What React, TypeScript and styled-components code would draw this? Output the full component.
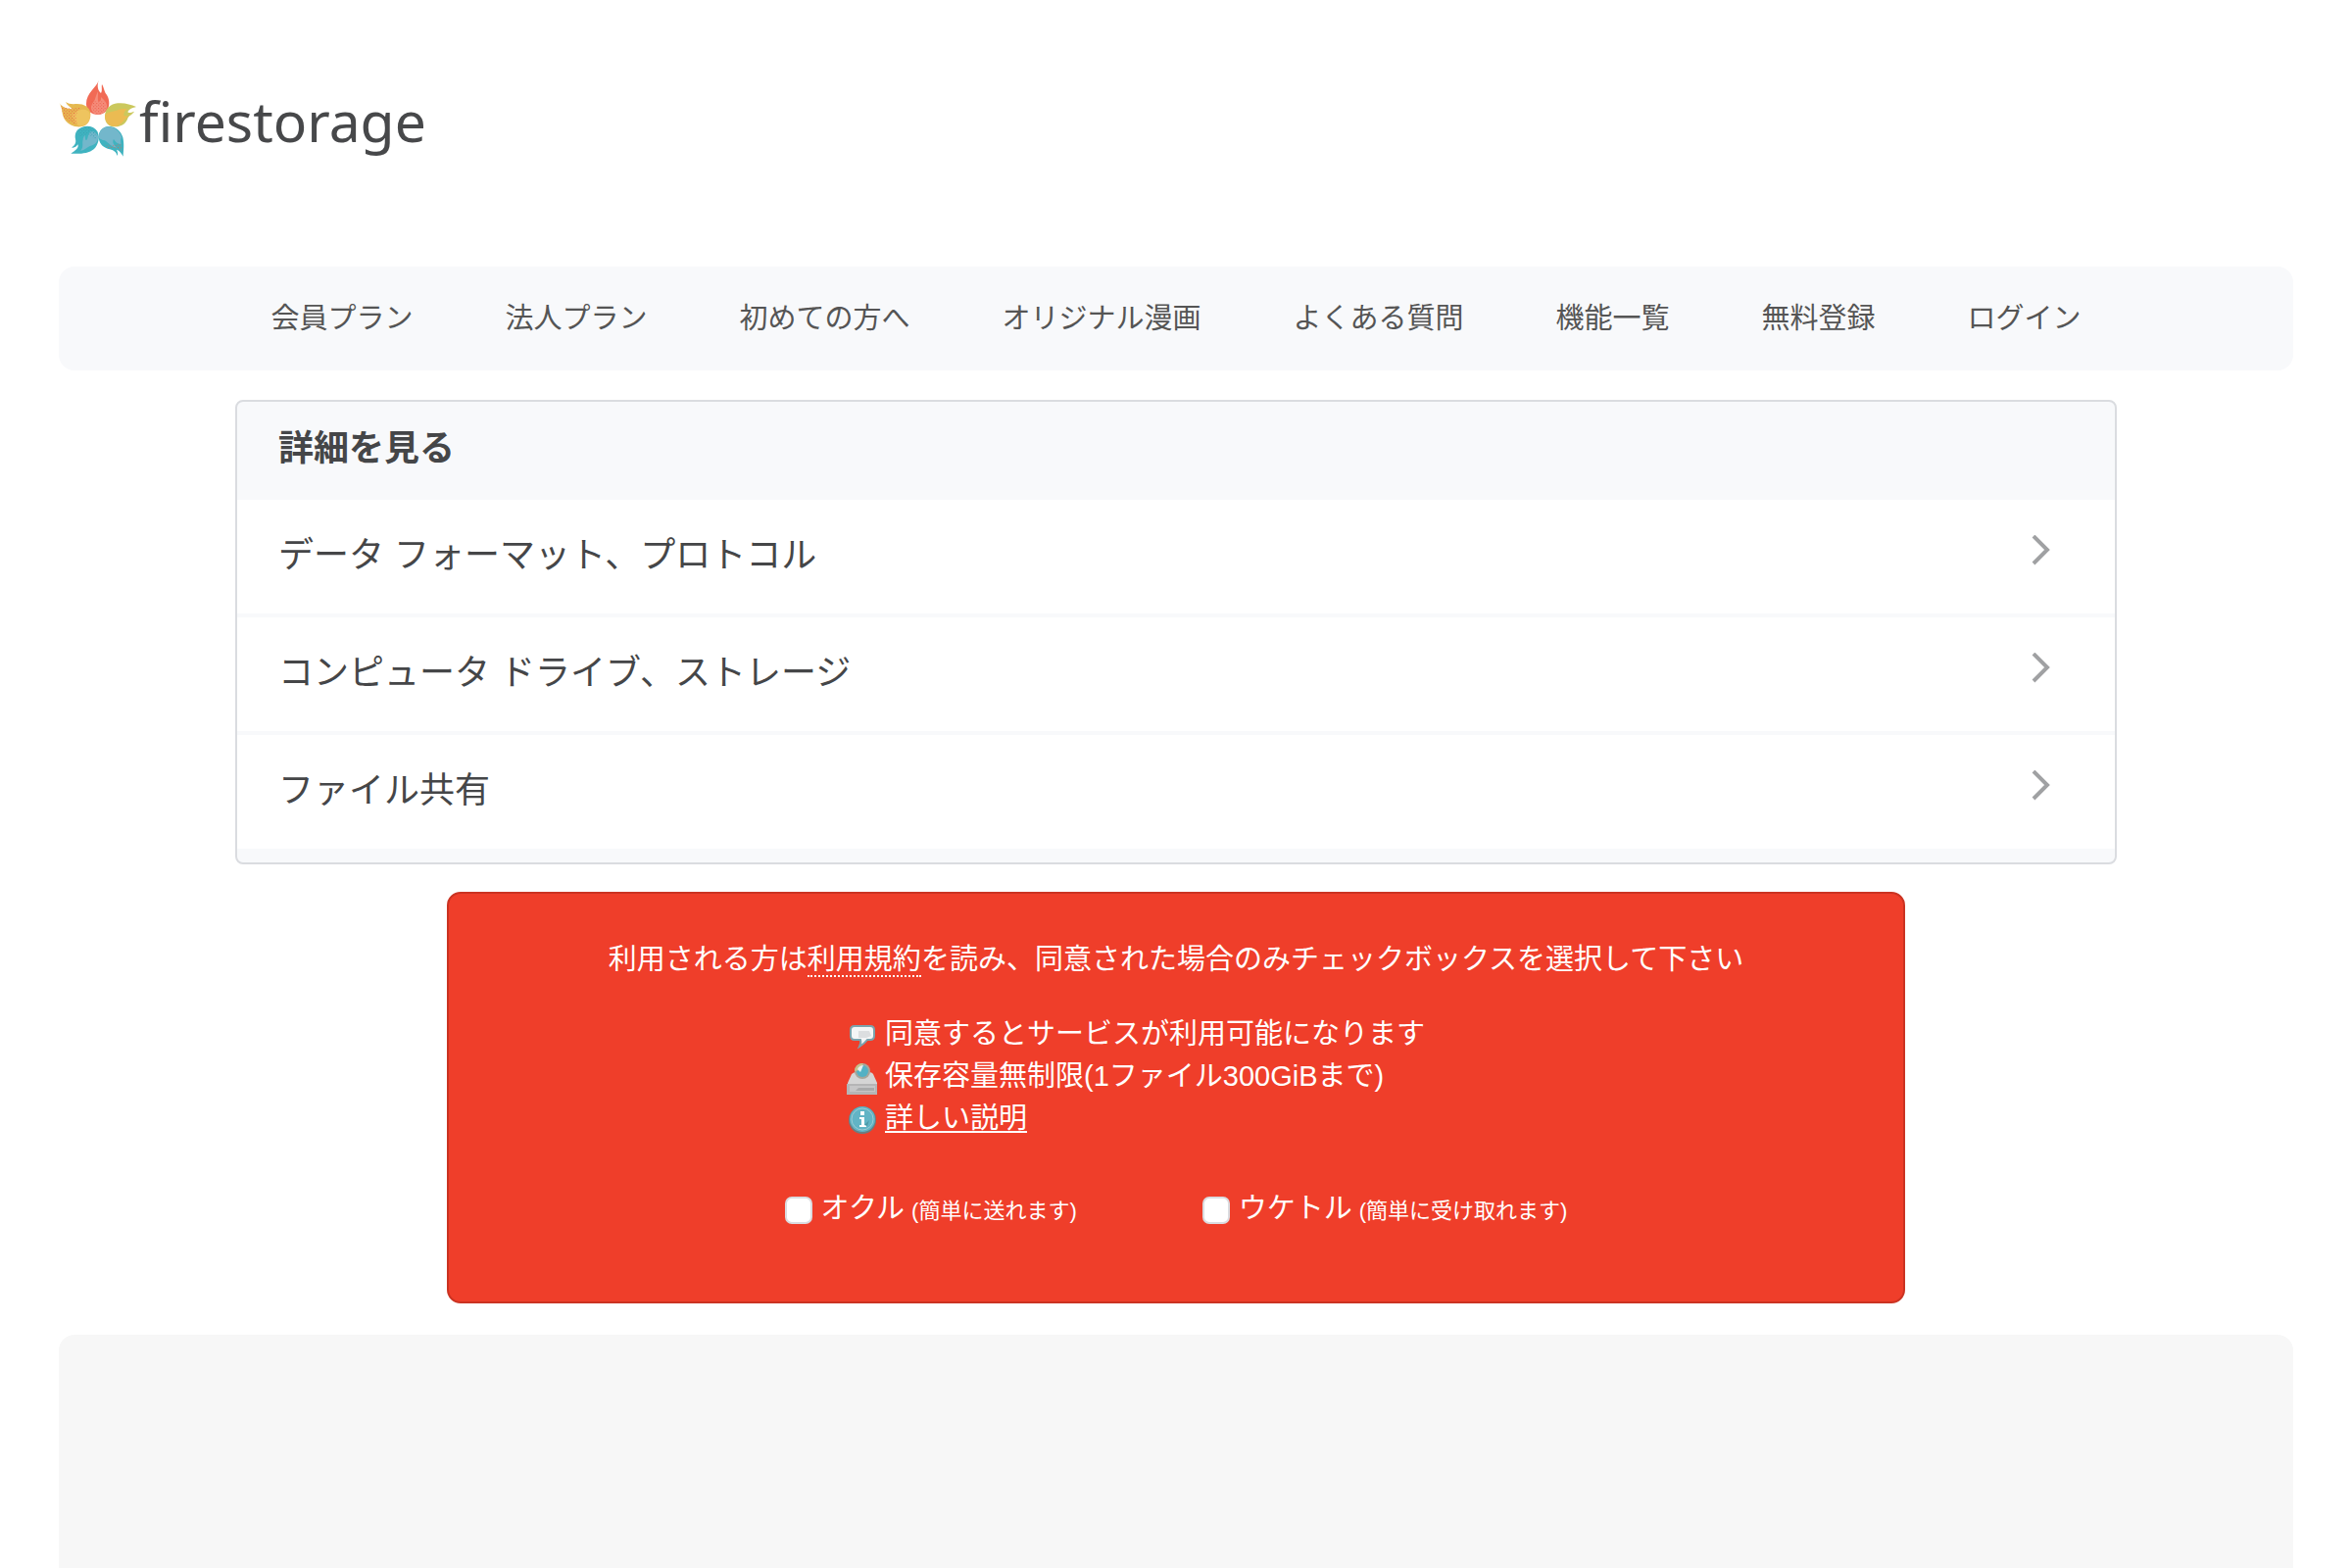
import React, { useState } from "react";
import styled, { createGlobalStyle } from "styled-components";

const GlobalStyle = createGlobalStyle`
  *, *::before, *::after { box-sizing: border-box; }
  body {
    margin: 0;
    background: #fff;
    color: #454648;
    font-family: "Liberation Sans", "Noto Sans CJK JP", sans-serif;
    font-size: 29px;
    line-height: 42px;
  }
  a { color: inherit; text-decoration: none; }
  ul { list-style: none; margin: 0; padding: 0; }
`;

const Page = styled.div`
  display: flex;
  flex-direction: column;
  min-height: 100vh;
  padding: 80px 60px 0;
`;

const Header = styled.header`
  display: flex;
  height: 192px;
  align-items: flex-start;
`;

const LogoLink = styled.a`
  display: flex;
  align-items: flex-start;
  gap: 2px;
`;

const LogoText = styled.span`
  font-family: "Noto Sans", sans-serif;
  font-size: 57px;
  line-height: 86px;
  color: #47484a;
`;

const Nav = styled.nav`
  background: #f8f9fb;
  border-radius: 16px;
  padding: 32px 0;
`;

const NavList = styled.ul`
  display: flex;
  justify-content: center;
  gap: 94px;
  color: #555;
`;

const Main = styled.main`
  flex: 1;
  display: flex;
  flex-direction: column;
`;

const Card = styled.section`
  width: 1920px;
  max-width: 100%;
  margin: 30px auto 0;
  padding-bottom: 14px;
  border: 2px solid #dadce0;
  border-radius: 8px;
  background: #f8f9fb;
  font-size: 36px;
`;

const CardTitle = styled.h2`
  margin: 0;
  padding: 21px 42px 25px;
  font-size: 36px;
  line-height: 54px;
  font-weight: 700;
`;

const TopicList = styled.ul`
  display: grid;
  gap: 4px;
`;

const TopicLink = styled.a`
  display: flex;
  align-items: center;
  justify-content: space-between;
  padding: 30px 66px 32px 42px;
  line-height: 54px;
  background: #fff;
`;

const Consent = styled.section`
  width: 1488px;
  max-width: 100%;
  margin: 28px auto 32px;
  padding: 46px 24px 74px;
  border: 2px solid #cb3322;
  border-radius: 14px;
  background: #ef3e2a;
  color: #fff;
`;

const Lead = styled.p`
  margin: 0 0 34px;
  text-align: center;
`;

const TermsLink = styled.a`
  border-bottom: 2px dotted #fff;
`;

const Notes = styled.ul`
  display: grid;
  gap: 1px;
  width: 672px;
  margin: 0 auto 50px;
`;

const Note = styled.li`
  display: flex;
  align-items: flex-end;
  gap: 7px;
`;

const DetailLink = styled.a`
  text-decoration: underline;
  text-decoration-thickness: 2px;
  text-underline-offset: 3px;
`;

const Options = styled.div`
  display: flex;
  justify-content: center;
  gap: 128px;
`;

const Option = styled.label`
  display: flex;
  align-items: baseline;
  cursor: pointer;

  small {
    margin-left: 7px;
    font-size: 22px;
    line-height: 30px;
  }
`;

const Check = styled.input`
  appearance: none;
  align-self: center;
  width: 28px;
  height: 28px;
  margin: 4px 9px 0 0;
  border: 2px solid #dadce0;
  border-radius: 7px;
  background: #fff;

  &:checked { background: #3fb3c0; }
`;

const Banner = styled.div`
  flex: 1;
  border-radius: 16px 16px 0 0;
  background: #f7f7f7;
`;

const Flower = () => (
  <svg width="80" height="80" viewBox="60 60 240 240" aria-hidden="true">
    <defs>
      <pattern id="dots" width="10" height="10" patternUnits="userSpaceOnUse">
        <rect width="3" height="3" fill="#ee5b48" />
        <rect x="5" y="5" width="3" height="3" fill="#ee5b48" />
      </pattern>
      <pattern id="tealDots" width="10" height="10" patternUnits="userSpaceOnUse">
        <rect width="3" height="3" fill="#3a9fb0" />
        <rect x="5" y="5" width="3" height="3" fill="#3a9fb0" />
      </pattern>
    </defs>
    <path fill="#f16a55" d="M182 66C176 88 144 104 144 138C144 158 160 171 180 171C200 171 214 156 214 136C214 114 204 110 200 98C197 90 196 84 192 78C190 88 194 98 189 105C180 98 176 84 182 66Z" />
    <path fill="#f48d7b" d="M179 100C182 110 178 116 180 128C186 134 190 128 189 117C200 128 208 134 207 148C205 163 194 170 180 170C168 170 160 163 159 150C159 138 170 130 172 120C174 112 177 108 179 100Z" />
    <path fill="url(#dots)" d="M160 130L200 130L205 150L190 169L164 166Z" />
    <path fill="#e5b950" d="M62 136C72 152 68 166 76 182C86 200 108 210 128 208C148 206 158 188 157 168C156 148 138 138 116 138C102 139 90 139 81 132C85 142 94 146 101 154C84 153 70 148 62 136Z" />
    <path fill="#f3cb69" opacity=".6" d="M96 166C104 174 108 168 116 160C132 152 152 154 156 170C156 190 146 204 128 206C110 206 108 184 96 166Z" />
    <path fill="url(#dots)" d="M66 144L94 152L126 150L112 172L116 202L88 190L76 180Z" />
    <path fill="#cbc85d" d="M297 147C280 140 262 134 240 136C218 138 202 152 201 176C201 198 214 208 232 208C256 207 266 196 271 182C275 173 285 171 291 161C282 164 274 168 271 163C275 153 286 150 297 147Z" />
    <path fill="#ebbb52" d="M201 172C212 160 232 162 242 156C254 152 264 153 271 152C262 157 258 165 259 174C266 176 270 176 276 174C264 180 256 198 238 206C218 210 201 198 201 172Z" />
    <path fill="#3fb3c0" d="M97 290C120 291 150 292 168 276C182 262 186 240 178 222C168 206 146 203 130 210C112 217 108 232 111 246C114 258 108 266 99 271C106 274 113 270 118 262C123 272 110 282 97 290Z" />
    <path fill="#73b7cb" d="M126 282C138 270 130 258 134 248C134 242 137 238 139 233C142 241 140 247 144 250C151 244 148 230 156 224C166 220 174 226 181 238C180 254 171 264 158 266C146 270 141 278 126 282Z" />
    <path fill="url(#tealDots)" d="M116 216L150 207L176 222L174 248L150 232L124 238Z" />
    <path fill="#3fb3c0" d="M257 299C258 280 261 262 256 240C250 220 232 206 210 207C190 210 180 226 182 244C186 264 200 274 216 277C230 280 236 287 239 297C242 291 240 285 237 278C246 281 252 290 257 299Z" />
    <path fill="#73b7cb" d="M183 242C182 222 194 209 212 208C232 209 248 224 252 240C247 248 250 254 250 262C240 260 232 254 228 246C222 256 230 266 238 272C220 270 212 256 200 250C192 248 188 246 183 242Z" />
    <path fill="url(#dots)" opacity=".75" d="M202 260L220 266L250 258L255 282L234 274L210 272Z" />
  </svg>
);

const Chevron = () => (
  <svg width="20" height="42" viewBox="0 0 20 42" fill="none" aria-hidden="true">
    <path d="M3 1L17 15L3 29" stroke="#a0a1a3" strokeWidth="4" />
  </svg>
);

const SpeechIcon = () => (
  <svg width="32" height="36" viewBox="0 1 32 36" aria-hidden="true">
    <path d="M8 8H24Q28 8 28 12V18Q28 22 24 22H21Q18 26 13 29Q15 25 14 22H8Q4 22 4 18V12Q4 8 8 8Z" fill="#f4f5f6" stroke="#7ba3ad" strokeWidth="2" />
    <path d="M12 13H23L25 18L20 20H12Z" fill="#dcdee0" />
  </svg>
);

const DiskIcon = () => (
  <svg width="32" height="34" viewBox="0 0 32 34" aria-hidden="true">
    <path d="M1 20L5 11Q7 9 10 9H22Q26 9 27 11L31 20V31H0Z" fill="#d5d5d5" />
    <path d="M0 21H31V32H0Z" fill="#b5b5b6" />
    <path d="M3 23H29V29H3Z" fill="#c6c6c7" />
    <path d="M12 25H28V28H9Z" fill="#a9aaab" />
    <circle cx="16" cy="8" r="8" fill="#a5a69b" />
    <circle cx="16" cy="8" r="6" fill="#53b1c4" />
    <path d="M8 8A8 8 0 0 1 17 0L13 7Z" fill="#c6c18b" />
    <path d="M11 6Q13 2 17 2L14 9Z" fill="#e7efef" />
  </svg>
);

const InfoIcon = () => (
  <svg width="32" height="34" viewBox="0 0 32 34" aria-hidden="true">
    <circle cx="16" cy="15" r="14" fill="#687f83" />
    <circle cx="16" cy="14" r="13" fill="#62b4c5" />
    <circle cx="16" cy="14" r="11" fill="none" stroke="#9bcbd4" strokeWidth="1" />
    <path d="M14 6H18V10H14ZM13 12H18V20H20V22H13V20H15V14H13Z" fill="#fff" />
    <path d="M18 20L23 15L21 21Z" fill="#4c99a7" />
  </svg>
);

const navItems = ["会員プラン", "法人プラン", "初めての方へ", "オリジナル漫画", "よくある質問", "機能一覧", "無料登録", "ログイン"];
const topics = ["データ フォーマット、プロトコル", "コンピュータ ドライブ、ストレージ", "ファイル共有"];

export default function App() {
  const [send, setSend] = useState(false);
  const [receive, setReceive] = useState(false);

  return (
    <>
      <GlobalStyle />
      <Page>
        <Header>
          <LogoLink href="#">
            <Flower />
            <LogoText>firestorage</LogoText>
          </LogoLink>
        </Header>
        <Nav>
          <NavList>
            {navItems.map((item) => (
              <li key={item}><a href="#">{item}</a></li>
            ))}
          </NavList>
        </Nav>
        <Main>
          <Card>
            <CardTitle>詳細を見る</CardTitle>
            <TopicList>
              {topics.map((topic) => (
                <li key={topic}>
                  <TopicLink href="#">
                    {topic}
                    <Chevron />
                  </TopicLink>
                </li>
              ))}
            </TopicList>
          </Card>
          <Consent>
            <Lead>
              利用される方は<TermsLink href="#">利用規約</TermsLink>を読み、同意された場合のみチェックボックスを選択して下さい
            </Lead>
            <Notes>
              <Note><SpeechIcon />同意するとサービスが利用可能になります</Note>
              <Note><DiskIcon />保存容量無制限(1ファイル300GiBまで)</Note>
              <Note><InfoIcon /><DetailLink href="#">詳しい説明</DetailLink></Note>
            </Notes>
            <Options>
              <Option htmlFor="send">
                <Check id="send" type="checkbox" checked={send} onChange={(e) => setSend(e.target.checked)} />
                オクル<small>(簡単に送れます)</small>
              </Option>
              <Option htmlFor="receive">
                <Check id="receive" type="checkbox" checked={receive} onChange={(e) => setReceive(e.target.checked)} />
                ウケトル<small>(簡単に受け取れます)</small>
              </Option>
            </Options>
          </Consent>
          <Banner />
        </Main>
      </Page>
    </>
  );
}
